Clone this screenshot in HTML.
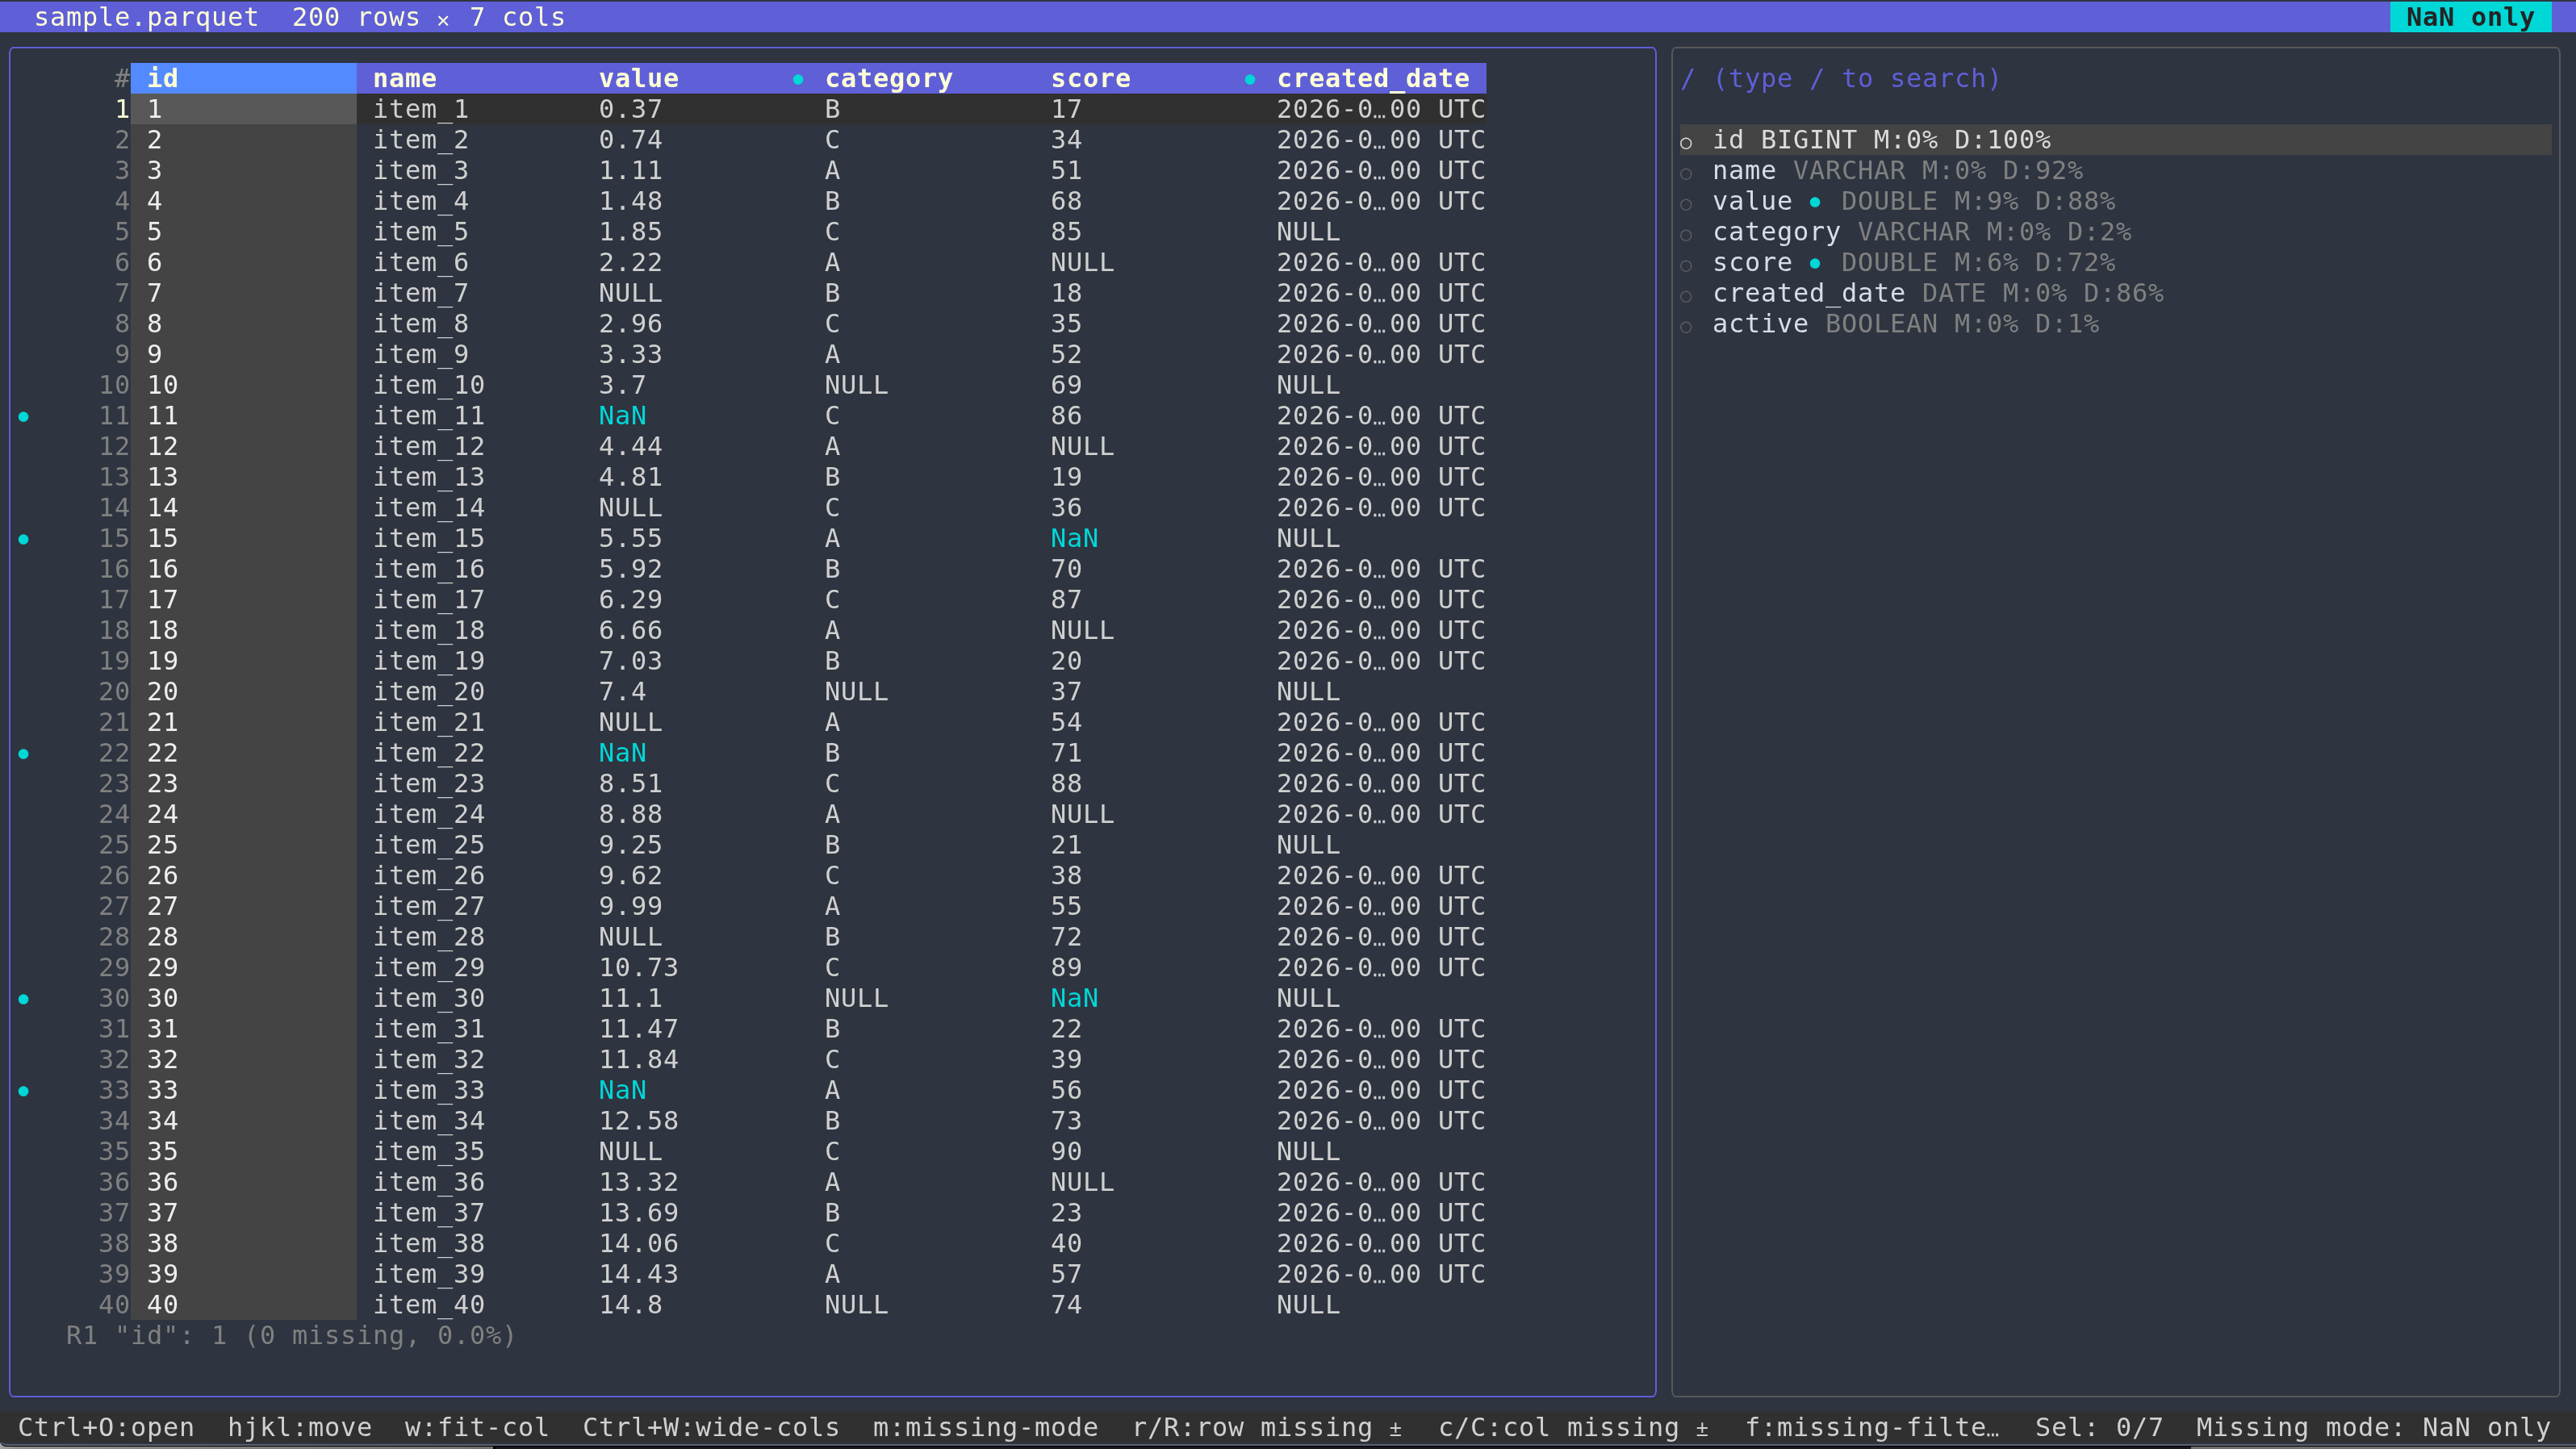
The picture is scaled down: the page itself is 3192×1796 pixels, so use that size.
<!DOCTYPE html>
<html lang="en"><head><meta charset="utf-8"><title>sample.parquet</title><style>
html,body{margin:0;padding:0;background:#2e3440;overflow:hidden}
#s{position:relative;width:3192px;height:1796px;overflow:hidden;will-change:transform;
background:linear-gradient(90deg,#a4a4a4 0,#8e8e8e 20px,#707070 611px,#000 611px,#000 614px,#16181e 614px,#16181e 2715px,#707070 2715px,#707070 100%);
font-family:"DejaVu Sans Mono","Liberation Mono",monospace;font-size:32px;line-height:38px;
font-kerning:none;font-variant-ligatures:none;letter-spacing:0.7344px;}
#win{position:absolute;left:0;top:0;width:3192px;height:1793px;background:#2e3440;overflow:hidden;border-bottom-left-radius:8px;
box-shadow:inset 0 -1px 0 #000,inset 0 -3px 0 #5d6270}
.r{position:absolute}
.t{position:absolute;white-space:pre;height:38px;line-height:38px}
.b{font-weight:bold}
.dot{font-size:21px;letter-spacing:0}
.circ{font-size:24px;letter-spacing:0}
.pm{font-family:"Liberation Mono","DejaVu Sans Mono",monospace;font-size:27px;letter-spacing:0}
.el{-webkit-text-stroke:0.45px currentColor}
.mul{font-family:"Liberation Mono","DejaVu Sans Mono",monospace;font-size:28.3px;letter-spacing:0}
</style></head><body><div id="s"><div id="win">
<div class="r" style="left:0px;top:2px;width:3192px;height:38px;background:#5f5fd7;"></div>
<span class="t" style="left:42px;top:2px;color:#ffffd7">sample.parquet</span>
<span class="t" style="left:362px;top:2px;color:#ffffd7">200 rows</span>
<span class="t mul" style="left:540.70px;top:7.60px;color:#ffffd7">×</span>
<span class="t" style="left:582px;top:2px;color:#ffffd7">7 cols</span>
<div class="r" style="left:2962px;top:2px;width:200px;height:38px;background:#00d7d7;"></div>
<span class="t b" style="left:2982px;top:2px;color:#242424">NaN only</span>
<div class="r" style="left:11px;top:58px;width:2042px;height:1674px;box-sizing:border-box;border:2px solid #5f5fd7;border-radius:5px/9px"></div>
<div class="r" style="left:2071px;top:58px;width:1102px;height:1674px;box-sizing:border-box;border:2px solid #585858;border-radius:5px/9px"></div>
<span class="t" style="left:142px;top:78px;color:#808080">#</span>
<div class="r" style="left:162px;top:78px;width:280px;height:38px;background:#548aff;"></div>
<div class="r" style="left:442px;top:78px;width:1400px;height:38px;background:#5f5fd7;"></div>
<span class="t b" style="left:182px;top:78px;color:#ffffd7">id</span>
<span class="t b" style="left:462px;top:78px;color:#ffffd7">name</span>
<span class="t b" style="left:742px;top:78px;color:#ffffd7">value</span>
<span class="t b" style="left:1022px;top:78px;color:#ffffd7">category</span>
<span class="t b" style="left:1302px;top:78px;color:#ffffd7">score</span>
<span class="t b" style="left:1582px;top:78px;color:#ffffd7">created_date</span>
<span class="t dot" style="left:982.80px;top:78.35px;color:#00d7d7">●</span>
<span class="t dot" style="left:1542.80px;top:78.35px;color:#00d7d7">●</span>
<div class="r" style="left:162px;top:116px;width:280px;height:1520px;background:#444444;"></div>
<div class="r" style="left:442px;top:116px;width:1400px;height:38px;background:#303030;"></div>
<div class="r" style="left:162px;top:116px;width:280px;height:38px;background:#585858;"></div>
<span class="t" style="left:142px;top:116px;color:#ffffd7">1</span>
<span class="t" style="left:182px;top:116px;color:#eeeeee">1</span>
<span class="t" style="left:462px;top:116px;color:#d0d0d0">item_1</span>
<span class="t" style="left:742px;top:116px;color:#d0d0d0">0.37</span>
<span class="t" style="left:1022px;top:116px;color:#d0d0d0">B</span>
<span class="t" style="left:1302px;top:116px;color:#d0d0d0">17</span>
<span class="t" style="left:1582px;top:116px;color:#d0d0d0">2026-0</span>
<span class="t pm el" style="left:1701.20px;top:119.70px;color:#d0d0d0">…</span>
<span class="t" style="left:1722px;top:116px;color:#d0d0d0">00 UTC</span>
<span class="t" style="left:142px;top:154px;color:#808080">2</span>
<span class="t" style="left:182px;top:154px;color:#eeeeee">2</span>
<span class="t" style="left:462px;top:154px;color:#d0d0d0">item_2</span>
<span class="t" style="left:742px;top:154px;color:#d0d0d0">0.74</span>
<span class="t" style="left:1022px;top:154px;color:#d0d0d0">C</span>
<span class="t" style="left:1302px;top:154px;color:#d0d0d0">34</span>
<span class="t" style="left:1582px;top:154px;color:#d0d0d0">2026-0</span>
<span class="t pm el" style="left:1701.20px;top:157.70px;color:#d0d0d0">…</span>
<span class="t" style="left:1722px;top:154px;color:#d0d0d0">00 UTC</span>
<span class="t" style="left:142px;top:192px;color:#808080">3</span>
<span class="t" style="left:182px;top:192px;color:#eeeeee">3</span>
<span class="t" style="left:462px;top:192px;color:#d0d0d0">item_3</span>
<span class="t" style="left:742px;top:192px;color:#d0d0d0">1.11</span>
<span class="t" style="left:1022px;top:192px;color:#d0d0d0">A</span>
<span class="t" style="left:1302px;top:192px;color:#d0d0d0">51</span>
<span class="t" style="left:1582px;top:192px;color:#d0d0d0">2026-0</span>
<span class="t pm el" style="left:1701.20px;top:195.70px;color:#d0d0d0">…</span>
<span class="t" style="left:1722px;top:192px;color:#d0d0d0">00 UTC</span>
<span class="t" style="left:142px;top:230px;color:#808080">4</span>
<span class="t" style="left:182px;top:230px;color:#eeeeee">4</span>
<span class="t" style="left:462px;top:230px;color:#d0d0d0">item_4</span>
<span class="t" style="left:742px;top:230px;color:#d0d0d0">1.48</span>
<span class="t" style="left:1022px;top:230px;color:#d0d0d0">B</span>
<span class="t" style="left:1302px;top:230px;color:#d0d0d0">68</span>
<span class="t" style="left:1582px;top:230px;color:#d0d0d0">2026-0</span>
<span class="t pm el" style="left:1701.20px;top:233.70px;color:#d0d0d0">…</span>
<span class="t" style="left:1722px;top:230px;color:#d0d0d0">00 UTC</span>
<span class="t" style="left:142px;top:268px;color:#808080">5</span>
<span class="t" style="left:182px;top:268px;color:#eeeeee">5</span>
<span class="t" style="left:462px;top:268px;color:#d0d0d0">item_5</span>
<span class="t" style="left:742px;top:268px;color:#d0d0d0">1.85</span>
<span class="t" style="left:1022px;top:268px;color:#d0d0d0">C</span>
<span class="t" style="left:1302px;top:268px;color:#d0d0d0">85</span>
<span class="t" style="left:1582px;top:268px;color:#d0d0d0">NULL</span>
<span class="t" style="left:142px;top:306px;color:#808080">6</span>
<span class="t" style="left:182px;top:306px;color:#eeeeee">6</span>
<span class="t" style="left:462px;top:306px;color:#d0d0d0">item_6</span>
<span class="t" style="left:742px;top:306px;color:#d0d0d0">2.22</span>
<span class="t" style="left:1022px;top:306px;color:#d0d0d0">A</span>
<span class="t" style="left:1302px;top:306px;color:#d0d0d0">NULL</span>
<span class="t" style="left:1582px;top:306px;color:#d0d0d0">2026-0</span>
<span class="t pm el" style="left:1701.20px;top:309.70px;color:#d0d0d0">…</span>
<span class="t" style="left:1722px;top:306px;color:#d0d0d0">00 UTC</span>
<span class="t" style="left:142px;top:344px;color:#808080">7</span>
<span class="t" style="left:182px;top:344px;color:#eeeeee">7</span>
<span class="t" style="left:462px;top:344px;color:#d0d0d0">item_7</span>
<span class="t" style="left:742px;top:344px;color:#d0d0d0">NULL</span>
<span class="t" style="left:1022px;top:344px;color:#d0d0d0">B</span>
<span class="t" style="left:1302px;top:344px;color:#d0d0d0">18</span>
<span class="t" style="left:1582px;top:344px;color:#d0d0d0">2026-0</span>
<span class="t pm el" style="left:1701.20px;top:347.70px;color:#d0d0d0">…</span>
<span class="t" style="left:1722px;top:344px;color:#d0d0d0">00 UTC</span>
<span class="t" style="left:142px;top:382px;color:#808080">8</span>
<span class="t" style="left:182px;top:382px;color:#eeeeee">8</span>
<span class="t" style="left:462px;top:382px;color:#d0d0d0">item_8</span>
<span class="t" style="left:742px;top:382px;color:#d0d0d0">2.96</span>
<span class="t" style="left:1022px;top:382px;color:#d0d0d0">C</span>
<span class="t" style="left:1302px;top:382px;color:#d0d0d0">35</span>
<span class="t" style="left:1582px;top:382px;color:#d0d0d0">2026-0</span>
<span class="t pm el" style="left:1701.20px;top:385.70px;color:#d0d0d0">…</span>
<span class="t" style="left:1722px;top:382px;color:#d0d0d0">00 UTC</span>
<span class="t" style="left:142px;top:420px;color:#808080">9</span>
<span class="t" style="left:182px;top:420px;color:#eeeeee">9</span>
<span class="t" style="left:462px;top:420px;color:#d0d0d0">item_9</span>
<span class="t" style="left:742px;top:420px;color:#d0d0d0">3.33</span>
<span class="t" style="left:1022px;top:420px;color:#d0d0d0">A</span>
<span class="t" style="left:1302px;top:420px;color:#d0d0d0">52</span>
<span class="t" style="left:1582px;top:420px;color:#d0d0d0">2026-0</span>
<span class="t pm el" style="left:1701.20px;top:423.70px;color:#d0d0d0">…</span>
<span class="t" style="left:1722px;top:420px;color:#d0d0d0">00 UTC</span>
<span class="t" style="left:122px;top:458px;color:#808080">10</span>
<span class="t" style="left:182px;top:458px;color:#eeeeee">10</span>
<span class="t" style="left:462px;top:458px;color:#d0d0d0">item_10</span>
<span class="t" style="left:742px;top:458px;color:#d0d0d0">3.7</span>
<span class="t" style="left:1022px;top:458px;color:#d0d0d0">NULL</span>
<span class="t" style="left:1302px;top:458px;color:#d0d0d0">69</span>
<span class="t" style="left:1582px;top:458px;color:#d0d0d0">NULL</span>
<span class="t" style="left:122px;top:496px;color:#808080">11</span>
<span class="t" style="left:182px;top:496px;color:#eeeeee">11</span>
<span class="t" style="left:462px;top:496px;color:#d0d0d0">item_11</span>
<span class="t" style="left:742px;top:496px;color:#00d7d7">NaN</span>
<span class="t" style="left:1022px;top:496px;color:#d0d0d0">C</span>
<span class="t" style="left:1302px;top:496px;color:#d0d0d0">86</span>
<span class="t" style="left:1582px;top:496px;color:#d0d0d0">2026-0</span>
<span class="t pm el" style="left:1701.20px;top:499.70px;color:#d0d0d0">…</span>
<span class="t" style="left:1722px;top:496px;color:#d0d0d0">00 UTC</span>
<span class="t dot" style="left:22.80px;top:496.35px;color:#00d7d7">●</span>
<span class="t" style="left:122px;top:534px;color:#808080">12</span>
<span class="t" style="left:182px;top:534px;color:#eeeeee">12</span>
<span class="t" style="left:462px;top:534px;color:#d0d0d0">item_12</span>
<span class="t" style="left:742px;top:534px;color:#d0d0d0">4.44</span>
<span class="t" style="left:1022px;top:534px;color:#d0d0d0">A</span>
<span class="t" style="left:1302px;top:534px;color:#d0d0d0">NULL</span>
<span class="t" style="left:1582px;top:534px;color:#d0d0d0">2026-0</span>
<span class="t pm el" style="left:1701.20px;top:537.70px;color:#d0d0d0">…</span>
<span class="t" style="left:1722px;top:534px;color:#d0d0d0">00 UTC</span>
<span class="t" style="left:122px;top:572px;color:#808080">13</span>
<span class="t" style="left:182px;top:572px;color:#eeeeee">13</span>
<span class="t" style="left:462px;top:572px;color:#d0d0d0">item_13</span>
<span class="t" style="left:742px;top:572px;color:#d0d0d0">4.81</span>
<span class="t" style="left:1022px;top:572px;color:#d0d0d0">B</span>
<span class="t" style="left:1302px;top:572px;color:#d0d0d0">19</span>
<span class="t" style="left:1582px;top:572px;color:#d0d0d0">2026-0</span>
<span class="t pm el" style="left:1701.20px;top:575.70px;color:#d0d0d0">…</span>
<span class="t" style="left:1722px;top:572px;color:#d0d0d0">00 UTC</span>
<span class="t" style="left:122px;top:610px;color:#808080">14</span>
<span class="t" style="left:182px;top:610px;color:#eeeeee">14</span>
<span class="t" style="left:462px;top:610px;color:#d0d0d0">item_14</span>
<span class="t" style="left:742px;top:610px;color:#d0d0d0">NULL</span>
<span class="t" style="left:1022px;top:610px;color:#d0d0d0">C</span>
<span class="t" style="left:1302px;top:610px;color:#d0d0d0">36</span>
<span class="t" style="left:1582px;top:610px;color:#d0d0d0">2026-0</span>
<span class="t pm el" style="left:1701.20px;top:613.70px;color:#d0d0d0">…</span>
<span class="t" style="left:1722px;top:610px;color:#d0d0d0">00 UTC</span>
<span class="t" style="left:122px;top:648px;color:#808080">15</span>
<span class="t" style="left:182px;top:648px;color:#eeeeee">15</span>
<span class="t" style="left:462px;top:648px;color:#d0d0d0">item_15</span>
<span class="t" style="left:742px;top:648px;color:#d0d0d0">5.55</span>
<span class="t" style="left:1022px;top:648px;color:#d0d0d0">A</span>
<span class="t" style="left:1302px;top:648px;color:#00d7d7">NaN</span>
<span class="t" style="left:1582px;top:648px;color:#d0d0d0">NULL</span>
<span class="t dot" style="left:22.80px;top:648.35px;color:#00d7d7">●</span>
<span class="t" style="left:122px;top:686px;color:#808080">16</span>
<span class="t" style="left:182px;top:686px;color:#eeeeee">16</span>
<span class="t" style="left:462px;top:686px;color:#d0d0d0">item_16</span>
<span class="t" style="left:742px;top:686px;color:#d0d0d0">5.92</span>
<span class="t" style="left:1022px;top:686px;color:#d0d0d0">B</span>
<span class="t" style="left:1302px;top:686px;color:#d0d0d0">70</span>
<span class="t" style="left:1582px;top:686px;color:#d0d0d0">2026-0</span>
<span class="t pm el" style="left:1701.20px;top:689.70px;color:#d0d0d0">…</span>
<span class="t" style="left:1722px;top:686px;color:#d0d0d0">00 UTC</span>
<span class="t" style="left:122px;top:724px;color:#808080">17</span>
<span class="t" style="left:182px;top:724px;color:#eeeeee">17</span>
<span class="t" style="left:462px;top:724px;color:#d0d0d0">item_17</span>
<span class="t" style="left:742px;top:724px;color:#d0d0d0">6.29</span>
<span class="t" style="left:1022px;top:724px;color:#d0d0d0">C</span>
<span class="t" style="left:1302px;top:724px;color:#d0d0d0">87</span>
<span class="t" style="left:1582px;top:724px;color:#d0d0d0">2026-0</span>
<span class="t pm el" style="left:1701.20px;top:727.70px;color:#d0d0d0">…</span>
<span class="t" style="left:1722px;top:724px;color:#d0d0d0">00 UTC</span>
<span class="t" style="left:122px;top:762px;color:#808080">18</span>
<span class="t" style="left:182px;top:762px;color:#eeeeee">18</span>
<span class="t" style="left:462px;top:762px;color:#d0d0d0">item_18</span>
<span class="t" style="left:742px;top:762px;color:#d0d0d0">6.66</span>
<span class="t" style="left:1022px;top:762px;color:#d0d0d0">A</span>
<span class="t" style="left:1302px;top:762px;color:#d0d0d0">NULL</span>
<span class="t" style="left:1582px;top:762px;color:#d0d0d0">2026-0</span>
<span class="t pm el" style="left:1701.20px;top:765.70px;color:#d0d0d0">…</span>
<span class="t" style="left:1722px;top:762px;color:#d0d0d0">00 UTC</span>
<span class="t" style="left:122px;top:800px;color:#808080">19</span>
<span class="t" style="left:182px;top:800px;color:#eeeeee">19</span>
<span class="t" style="left:462px;top:800px;color:#d0d0d0">item_19</span>
<span class="t" style="left:742px;top:800px;color:#d0d0d0">7.03</span>
<span class="t" style="left:1022px;top:800px;color:#d0d0d0">B</span>
<span class="t" style="left:1302px;top:800px;color:#d0d0d0">20</span>
<span class="t" style="left:1582px;top:800px;color:#d0d0d0">2026-0</span>
<span class="t pm el" style="left:1701.20px;top:803.70px;color:#d0d0d0">…</span>
<span class="t" style="left:1722px;top:800px;color:#d0d0d0">00 UTC</span>
<span class="t" style="left:122px;top:838px;color:#808080">20</span>
<span class="t" style="left:182px;top:838px;color:#eeeeee">20</span>
<span class="t" style="left:462px;top:838px;color:#d0d0d0">item_20</span>
<span class="t" style="left:742px;top:838px;color:#d0d0d0">7.4</span>
<span class="t" style="left:1022px;top:838px;color:#d0d0d0">NULL</span>
<span class="t" style="left:1302px;top:838px;color:#d0d0d0">37</span>
<span class="t" style="left:1582px;top:838px;color:#d0d0d0">NULL</span>
<span class="t" style="left:122px;top:876px;color:#808080">21</span>
<span class="t" style="left:182px;top:876px;color:#eeeeee">21</span>
<span class="t" style="left:462px;top:876px;color:#d0d0d0">item_21</span>
<span class="t" style="left:742px;top:876px;color:#d0d0d0">NULL</span>
<span class="t" style="left:1022px;top:876px;color:#d0d0d0">A</span>
<span class="t" style="left:1302px;top:876px;color:#d0d0d0">54</span>
<span class="t" style="left:1582px;top:876px;color:#d0d0d0">2026-0</span>
<span class="t pm el" style="left:1701.20px;top:879.70px;color:#d0d0d0">…</span>
<span class="t" style="left:1722px;top:876px;color:#d0d0d0">00 UTC</span>
<span class="t" style="left:122px;top:914px;color:#808080">22</span>
<span class="t" style="left:182px;top:914px;color:#eeeeee">22</span>
<span class="t" style="left:462px;top:914px;color:#d0d0d0">item_22</span>
<span class="t" style="left:742px;top:914px;color:#00d7d7">NaN</span>
<span class="t" style="left:1022px;top:914px;color:#d0d0d0">B</span>
<span class="t" style="left:1302px;top:914px;color:#d0d0d0">71</span>
<span class="t" style="left:1582px;top:914px;color:#d0d0d0">2026-0</span>
<span class="t pm el" style="left:1701.20px;top:917.70px;color:#d0d0d0">…</span>
<span class="t" style="left:1722px;top:914px;color:#d0d0d0">00 UTC</span>
<span class="t dot" style="left:22.80px;top:914.35px;color:#00d7d7">●</span>
<span class="t" style="left:122px;top:952px;color:#808080">23</span>
<span class="t" style="left:182px;top:952px;color:#eeeeee">23</span>
<span class="t" style="left:462px;top:952px;color:#d0d0d0">item_23</span>
<span class="t" style="left:742px;top:952px;color:#d0d0d0">8.51</span>
<span class="t" style="left:1022px;top:952px;color:#d0d0d0">C</span>
<span class="t" style="left:1302px;top:952px;color:#d0d0d0">88</span>
<span class="t" style="left:1582px;top:952px;color:#d0d0d0">2026-0</span>
<span class="t pm el" style="left:1701.20px;top:955.70px;color:#d0d0d0">…</span>
<span class="t" style="left:1722px;top:952px;color:#d0d0d0">00 UTC</span>
<span class="t" style="left:122px;top:990px;color:#808080">24</span>
<span class="t" style="left:182px;top:990px;color:#eeeeee">24</span>
<span class="t" style="left:462px;top:990px;color:#d0d0d0">item_24</span>
<span class="t" style="left:742px;top:990px;color:#d0d0d0">8.88</span>
<span class="t" style="left:1022px;top:990px;color:#d0d0d0">A</span>
<span class="t" style="left:1302px;top:990px;color:#d0d0d0">NULL</span>
<span class="t" style="left:1582px;top:990px;color:#d0d0d0">2026-0</span>
<span class="t pm el" style="left:1701.20px;top:993.70px;color:#d0d0d0">…</span>
<span class="t" style="left:1722px;top:990px;color:#d0d0d0">00 UTC</span>
<span class="t" style="left:122px;top:1028px;color:#808080">25</span>
<span class="t" style="left:182px;top:1028px;color:#eeeeee">25</span>
<span class="t" style="left:462px;top:1028px;color:#d0d0d0">item_25</span>
<span class="t" style="left:742px;top:1028px;color:#d0d0d0">9.25</span>
<span class="t" style="left:1022px;top:1028px;color:#d0d0d0">B</span>
<span class="t" style="left:1302px;top:1028px;color:#d0d0d0">21</span>
<span class="t" style="left:1582px;top:1028px;color:#d0d0d0">NULL</span>
<span class="t" style="left:122px;top:1066px;color:#808080">26</span>
<span class="t" style="left:182px;top:1066px;color:#eeeeee">26</span>
<span class="t" style="left:462px;top:1066px;color:#d0d0d0">item_26</span>
<span class="t" style="left:742px;top:1066px;color:#d0d0d0">9.62</span>
<span class="t" style="left:1022px;top:1066px;color:#d0d0d0">C</span>
<span class="t" style="left:1302px;top:1066px;color:#d0d0d0">38</span>
<span class="t" style="left:1582px;top:1066px;color:#d0d0d0">2026-0</span>
<span class="t pm el" style="left:1701.20px;top:1069.70px;color:#d0d0d0">…</span>
<span class="t" style="left:1722px;top:1066px;color:#d0d0d0">00 UTC</span>
<span class="t" style="left:122px;top:1104px;color:#808080">27</span>
<span class="t" style="left:182px;top:1104px;color:#eeeeee">27</span>
<span class="t" style="left:462px;top:1104px;color:#d0d0d0">item_27</span>
<span class="t" style="left:742px;top:1104px;color:#d0d0d0">9.99</span>
<span class="t" style="left:1022px;top:1104px;color:#d0d0d0">A</span>
<span class="t" style="left:1302px;top:1104px;color:#d0d0d0">55</span>
<span class="t" style="left:1582px;top:1104px;color:#d0d0d0">2026-0</span>
<span class="t pm el" style="left:1701.20px;top:1107.70px;color:#d0d0d0">…</span>
<span class="t" style="left:1722px;top:1104px;color:#d0d0d0">00 UTC</span>
<span class="t" style="left:122px;top:1142px;color:#808080">28</span>
<span class="t" style="left:182px;top:1142px;color:#eeeeee">28</span>
<span class="t" style="left:462px;top:1142px;color:#d0d0d0">item_28</span>
<span class="t" style="left:742px;top:1142px;color:#d0d0d0">NULL</span>
<span class="t" style="left:1022px;top:1142px;color:#d0d0d0">B</span>
<span class="t" style="left:1302px;top:1142px;color:#d0d0d0">72</span>
<span class="t" style="left:1582px;top:1142px;color:#d0d0d0">2026-0</span>
<span class="t pm el" style="left:1701.20px;top:1145.70px;color:#d0d0d0">…</span>
<span class="t" style="left:1722px;top:1142px;color:#d0d0d0">00 UTC</span>
<span class="t" style="left:122px;top:1180px;color:#808080">29</span>
<span class="t" style="left:182px;top:1180px;color:#eeeeee">29</span>
<span class="t" style="left:462px;top:1180px;color:#d0d0d0">item_29</span>
<span class="t" style="left:742px;top:1180px;color:#d0d0d0">10.73</span>
<span class="t" style="left:1022px;top:1180px;color:#d0d0d0">C</span>
<span class="t" style="left:1302px;top:1180px;color:#d0d0d0">89</span>
<span class="t" style="left:1582px;top:1180px;color:#d0d0d0">2026-0</span>
<span class="t pm el" style="left:1701.20px;top:1183.70px;color:#d0d0d0">…</span>
<span class="t" style="left:1722px;top:1180px;color:#d0d0d0">00 UTC</span>
<span class="t" style="left:122px;top:1218px;color:#808080">30</span>
<span class="t" style="left:182px;top:1218px;color:#eeeeee">30</span>
<span class="t" style="left:462px;top:1218px;color:#d0d0d0">item_30</span>
<span class="t" style="left:742px;top:1218px;color:#d0d0d0">11.1</span>
<span class="t" style="left:1022px;top:1218px;color:#d0d0d0">NULL</span>
<span class="t" style="left:1302px;top:1218px;color:#00d7d7">NaN</span>
<span class="t" style="left:1582px;top:1218px;color:#d0d0d0">NULL</span>
<span class="t dot" style="left:22.80px;top:1218.35px;color:#00d7d7">●</span>
<span class="t" style="left:122px;top:1256px;color:#808080">31</span>
<span class="t" style="left:182px;top:1256px;color:#eeeeee">31</span>
<span class="t" style="left:462px;top:1256px;color:#d0d0d0">item_31</span>
<span class="t" style="left:742px;top:1256px;color:#d0d0d0">11.47</span>
<span class="t" style="left:1022px;top:1256px;color:#d0d0d0">B</span>
<span class="t" style="left:1302px;top:1256px;color:#d0d0d0">22</span>
<span class="t" style="left:1582px;top:1256px;color:#d0d0d0">2026-0</span>
<span class="t pm el" style="left:1701.20px;top:1259.70px;color:#d0d0d0">…</span>
<span class="t" style="left:1722px;top:1256px;color:#d0d0d0">00 UTC</span>
<span class="t" style="left:122px;top:1294px;color:#808080">32</span>
<span class="t" style="left:182px;top:1294px;color:#eeeeee">32</span>
<span class="t" style="left:462px;top:1294px;color:#d0d0d0">item_32</span>
<span class="t" style="left:742px;top:1294px;color:#d0d0d0">11.84</span>
<span class="t" style="left:1022px;top:1294px;color:#d0d0d0">C</span>
<span class="t" style="left:1302px;top:1294px;color:#d0d0d0">39</span>
<span class="t" style="left:1582px;top:1294px;color:#d0d0d0">2026-0</span>
<span class="t pm el" style="left:1701.20px;top:1297.70px;color:#d0d0d0">…</span>
<span class="t" style="left:1722px;top:1294px;color:#d0d0d0">00 UTC</span>
<span class="t" style="left:122px;top:1332px;color:#808080">33</span>
<span class="t" style="left:182px;top:1332px;color:#eeeeee">33</span>
<span class="t" style="left:462px;top:1332px;color:#d0d0d0">item_33</span>
<span class="t" style="left:742px;top:1332px;color:#00d7d7">NaN</span>
<span class="t" style="left:1022px;top:1332px;color:#d0d0d0">A</span>
<span class="t" style="left:1302px;top:1332px;color:#d0d0d0">56</span>
<span class="t" style="left:1582px;top:1332px;color:#d0d0d0">2026-0</span>
<span class="t pm el" style="left:1701.20px;top:1335.70px;color:#d0d0d0">…</span>
<span class="t" style="left:1722px;top:1332px;color:#d0d0d0">00 UTC</span>
<span class="t dot" style="left:22.80px;top:1332.35px;color:#00d7d7">●</span>
<span class="t" style="left:122px;top:1370px;color:#808080">34</span>
<span class="t" style="left:182px;top:1370px;color:#eeeeee">34</span>
<span class="t" style="left:462px;top:1370px;color:#d0d0d0">item_34</span>
<span class="t" style="left:742px;top:1370px;color:#d0d0d0">12.58</span>
<span class="t" style="left:1022px;top:1370px;color:#d0d0d0">B</span>
<span class="t" style="left:1302px;top:1370px;color:#d0d0d0">73</span>
<span class="t" style="left:1582px;top:1370px;color:#d0d0d0">2026-0</span>
<span class="t pm el" style="left:1701.20px;top:1373.70px;color:#d0d0d0">…</span>
<span class="t" style="left:1722px;top:1370px;color:#d0d0d0">00 UTC</span>
<span class="t" style="left:122px;top:1408px;color:#808080">35</span>
<span class="t" style="left:182px;top:1408px;color:#eeeeee">35</span>
<span class="t" style="left:462px;top:1408px;color:#d0d0d0">item_35</span>
<span class="t" style="left:742px;top:1408px;color:#d0d0d0">NULL</span>
<span class="t" style="left:1022px;top:1408px;color:#d0d0d0">C</span>
<span class="t" style="left:1302px;top:1408px;color:#d0d0d0">90</span>
<span class="t" style="left:1582px;top:1408px;color:#d0d0d0">NULL</span>
<span class="t" style="left:122px;top:1446px;color:#808080">36</span>
<span class="t" style="left:182px;top:1446px;color:#eeeeee">36</span>
<span class="t" style="left:462px;top:1446px;color:#d0d0d0">item_36</span>
<span class="t" style="left:742px;top:1446px;color:#d0d0d0">13.32</span>
<span class="t" style="left:1022px;top:1446px;color:#d0d0d0">A</span>
<span class="t" style="left:1302px;top:1446px;color:#d0d0d0">NULL</span>
<span class="t" style="left:1582px;top:1446px;color:#d0d0d0">2026-0</span>
<span class="t pm el" style="left:1701.20px;top:1449.70px;color:#d0d0d0">…</span>
<span class="t" style="left:1722px;top:1446px;color:#d0d0d0">00 UTC</span>
<span class="t" style="left:122px;top:1484px;color:#808080">37</span>
<span class="t" style="left:182px;top:1484px;color:#eeeeee">37</span>
<span class="t" style="left:462px;top:1484px;color:#d0d0d0">item_37</span>
<span class="t" style="left:742px;top:1484px;color:#d0d0d0">13.69</span>
<span class="t" style="left:1022px;top:1484px;color:#d0d0d0">B</span>
<span class="t" style="left:1302px;top:1484px;color:#d0d0d0">23</span>
<span class="t" style="left:1582px;top:1484px;color:#d0d0d0">2026-0</span>
<span class="t pm el" style="left:1701.20px;top:1487.70px;color:#d0d0d0">…</span>
<span class="t" style="left:1722px;top:1484px;color:#d0d0d0">00 UTC</span>
<span class="t" style="left:122px;top:1522px;color:#808080">38</span>
<span class="t" style="left:182px;top:1522px;color:#eeeeee">38</span>
<span class="t" style="left:462px;top:1522px;color:#d0d0d0">item_38</span>
<span class="t" style="left:742px;top:1522px;color:#d0d0d0">14.06</span>
<span class="t" style="left:1022px;top:1522px;color:#d0d0d0">C</span>
<span class="t" style="left:1302px;top:1522px;color:#d0d0d0">40</span>
<span class="t" style="left:1582px;top:1522px;color:#d0d0d0">2026-0</span>
<span class="t pm el" style="left:1701.20px;top:1525.70px;color:#d0d0d0">…</span>
<span class="t" style="left:1722px;top:1522px;color:#d0d0d0">00 UTC</span>
<span class="t" style="left:122px;top:1560px;color:#808080">39</span>
<span class="t" style="left:182px;top:1560px;color:#eeeeee">39</span>
<span class="t" style="left:462px;top:1560px;color:#d0d0d0">item_39</span>
<span class="t" style="left:742px;top:1560px;color:#d0d0d0">14.43</span>
<span class="t" style="left:1022px;top:1560px;color:#d0d0d0">A</span>
<span class="t" style="left:1302px;top:1560px;color:#d0d0d0">57</span>
<span class="t" style="left:1582px;top:1560px;color:#d0d0d0">2026-0</span>
<span class="t pm el" style="left:1701.20px;top:1563.70px;color:#d0d0d0">…</span>
<span class="t" style="left:1722px;top:1560px;color:#d0d0d0">00 UTC</span>
<span class="t" style="left:122px;top:1598px;color:#808080">40</span>
<span class="t" style="left:182px;top:1598px;color:#eeeeee">40</span>
<span class="t" style="left:462px;top:1598px;color:#d0d0d0">item_40</span>
<span class="t" style="left:742px;top:1598px;color:#d0d0d0">14.8</span>
<span class="t" style="left:1022px;top:1598px;color:#d0d0d0">NULL</span>
<span class="t" style="left:1302px;top:1598px;color:#d0d0d0">74</span>
<span class="t" style="left:1582px;top:1598px;color:#d0d0d0">NULL</span>
<span class="t" style="left:82px;top:1636px;color:#808080">R1 "id": 1 (0 missing, 0.0%)</span>
<span class="t" style="left:2082px;top:78px;color:#5f5fd7">/ (type / to search)</span>
<div class="r" style="left:2082px;top:154px;width:1080px;height:38px;background:#444444;"></div>
<span class="t circ" style="left:2082.00px;top:157.30px;color:#dadada">○</span>
<span class="t" style="left:2122px;top:154px;color:#dadada">id</span>
<span class="t" style="left:2182px;top:154px;color:#dadada">BIGINT M:0% D:100%</span>
<span class="t circ" style="left:2082.00px;top:195.30px;color:#5c5c5c">○</span>
<span class="t" style="left:2122px;top:192px;color:#d8dee9">name</span>
<span class="t" style="left:2222px;top:192px;color:#808080">VARCHAR M:0% D:92%</span>
<span class="t circ" style="left:2082.00px;top:233.30px;color:#5c5c5c">○</span>
<span class="t" style="left:2122px;top:230px;color:#d8dee9">value</span>
<span class="t dot" style="left:2242.80px;top:230.35px;color:#00d7d7">●</span>
<span class="t" style="left:2282px;top:230px;color:#808080">DOUBLE M:9% D:88%</span>
<span class="t circ" style="left:2082.00px;top:271.30px;color:#5c5c5c">○</span>
<span class="t" style="left:2122px;top:268px;color:#d8dee9">category</span>
<span class="t" style="left:2302px;top:268px;color:#808080">VARCHAR M:0% D:2%</span>
<span class="t circ" style="left:2082.00px;top:309.30px;color:#5c5c5c">○</span>
<span class="t" style="left:2122px;top:306px;color:#d8dee9">score</span>
<span class="t dot" style="left:2242.80px;top:306.35px;color:#00d7d7">●</span>
<span class="t" style="left:2282px;top:306px;color:#808080">DOUBLE M:6% D:72%</span>
<span class="t circ" style="left:2082.00px;top:347.30px;color:#5c5c5c">○</span>
<span class="t" style="left:2122px;top:344px;color:#d8dee9">created_date</span>
<span class="t" style="left:2382px;top:344px;color:#808080">DATE M:0% D:86%</span>
<span class="t circ" style="left:2082.00px;top:385.30px;color:#5c5c5c">○</span>
<span class="t" style="left:2122px;top:382px;color:#d8dee9">active</span>
<span class="t" style="left:2262px;top:382px;color:#808080">BOOLEAN M:0% D:1%</span>
<div class="r" style="left:0px;top:1750px;width:3192px;height:38px;background:#303030;"></div>
<span class="t" style="left:22px;top:1750px;color:#d0d0d0">Ctrl+O:open</span>
<span class="t" style="left:282px;top:1750px;color:#d0d0d0">hjkl:move</span>
<span class="t" style="left:502px;top:1750px;color:#d0d0d0">w:fit-col</span>
<span class="t" style="left:722px;top:1750px;color:#d0d0d0">Ctrl+W:wide-cols</span>
<span class="t" style="left:1082px;top:1750px;color:#d0d0d0">m:missing-mode</span>
<span class="t" style="left:1402px;top:1750px;color:#d0d0d0">r/R:row missing</span>
<span class="t pm" style="left:1721.20px;top:1753.70px;color:#d0d0d0">±</span>
<span class="t" style="left:1782px;top:1750px;color:#d0d0d0">c/C:col missing</span>
<span class="t pm" style="left:2101.20px;top:1753.70px;color:#d0d0d0">±</span>
<span class="t" style="left:2162px;top:1750px;color:#d0d0d0">f:missing-filte</span>
<span class="t pm el" style="left:2461.20px;top:1753.70px;color:#d0d0d0">…</span>
<span class="t" style="left:2522px;top:1750px;color:#d0d0d0">Sel: 0/7</span>
<span class="t" style="left:2722px;top:1750px;color:#d0d0d0">Missing mode: NaN only</span>
</div></div></body></html>
